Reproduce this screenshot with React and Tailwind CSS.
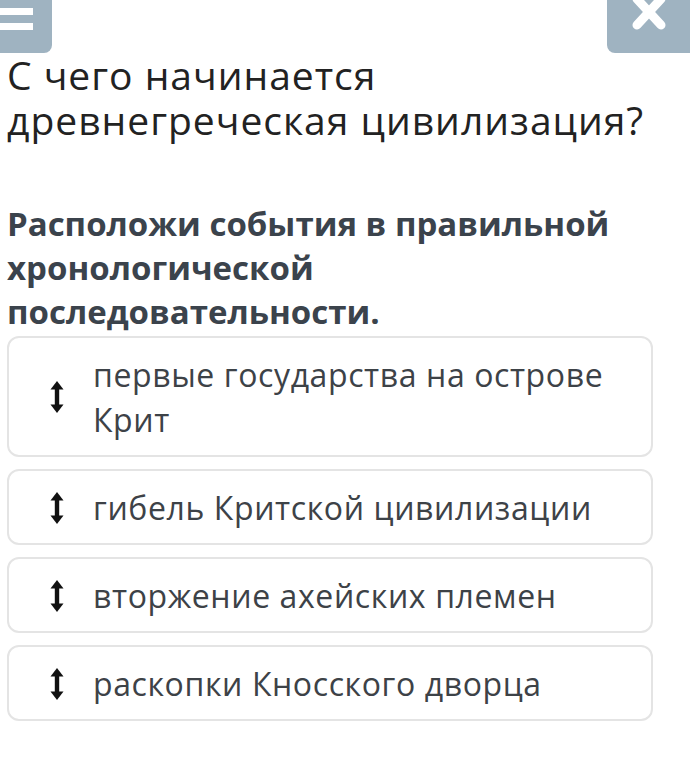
import React from 'react';

const items = [
    'первые государства на острове Крит',
    'гибель Критской цивилизации',
    'вторжение ахейских племен',
    'раскопки Кносского дворца',
];

function SortIcon() {
    return (
        <svg width="14" height="32" viewBox="0 0 14 32" className="shrink-0">
            <path d="M7 0 L13.5 8.5 L0.5 8.5 Z" fill="#111" />
            <rect x="4.8" y="6" width="4.4" height="20" fill="#111" />
            <path d="M7 32 L13.5 23.5 L0.5 23.5 Z" fill="#111" />
        </svg>
    );
}

export default function App() {
    return (
        <div className="w-[690px] h-[762px] bg-white overflow-hidden" style={{ fontFamily: '"Open Sans", sans-serif' }}>
            <div className="flex justify-between h-[52px]">
                <div className="w-[52px] h-[53px] bg-[#9fb3c1] rounded-br-lg flex flex-col gap-[8px] pt-[8px]">
                    <div className="w-[33px] h-[7px] bg-white" />
                    <div className="w-[33px] h-[7px] bg-white" />
                </div>
                <div className="w-[83px] h-[53px] bg-[#9fb3c1] rounded-bl-lg flex justify-center">
                    <svg width="36" height="32" viewBox="0 0 36 32" className="-mt-[2px]">
                        <path d="M6 1 L30 27 M30 1 L6 27" stroke="#fff" strokeWidth="9" strokeLinecap="round" />
                    </svg>
                </div>
            </div>

            <h1 className="px-[7px] text-[39px] leading-[45px] tracking-[1px] text-[#222] font-normal">
                С чего начинается<br />древнегреческая цивилизация?
            </h1>

            <p className="pl-[7px] pr-[30px] mt-[60px] text-[33px] leading-[44px] font-bold text-[#3b434c]">
                Расположи события в правильной хронологической последовательности.
            </p>

            <div className="mt-[2px] flex flex-col gap-[12px] pl-[7px] pr-[37px]">
                {items.map((t) => (
                    <div key={t} className="flex items-center border-2 border-[#e4e4e4] rounded-[12px] pt-[14px] pb-[13px] pl-[41px] pr-[20px]">
                        <SortIcon />
                        <span className="ml-[29px] text-[32px] leading-[45px] tracking-[0.6px] text-[#3d4247]">{t}</span>
                    </div>
                ))}
            </div>
        </div>
    );
}
